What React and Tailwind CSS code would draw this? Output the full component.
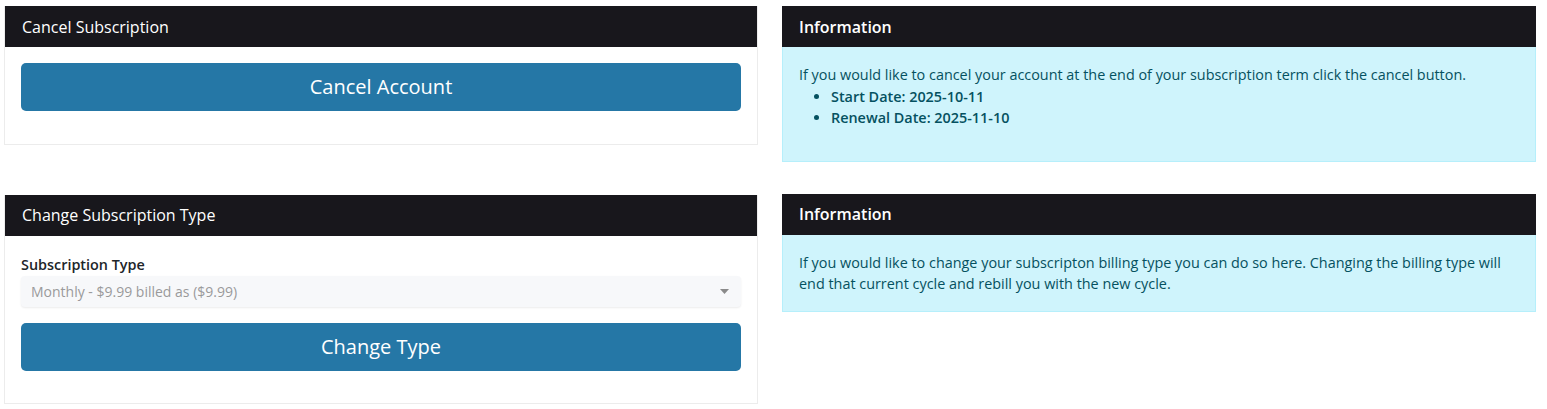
import React from "react";

const font = { fontFamily: '"Open Sans", "Noto Sans", sans-serif' };

function Header({ children, bold }) {
  return (
    <div className={`h-[41px] bg-[#18171c] flex items-center px-[17px] text-white text-[16px] ${bold ? "font-semibold" : ""}`}>
      {children}
    </div>
  );
}

function Info({ children }) {
  return (
    <div className="w-[754px]">
      <Header bold>Information</Header>
      <div className="bg-[#cff4fc] border border-t-0 border-[#b6effb] text-[#055160] text-[14.4px] leading-[21.6px] px-[16px] pt-[17px] pb-[16px]">
        {children}
      </div>
    </div>
  );
}

export default function App() {
  return (
    <div style={font} className="bg-white w-[1547px] h-[409px] pl-[4px] pt-[6px]">
      <div className="grid grid-cols-[754px_754px] gap-x-[24px] gap-y-[32px] items-start">
        <div className="border border-[#ececec] border-t-0">
          <Header>Cancel Subscription</Header>
          <div className="px-[16px] pt-[16px] pb-[33px]">
            <button className="w-full h-[48px] rounded-[5px] bg-[#2577a6] text-white text-[20px] flex items-center justify-center">
              Cancel Account
            </button>
          </div>
        </div>

        <Info>
          <p>If you would like to cancel your account at the end of your subscription term click the cancel button.</p>
          <ul className="list-disc pl-[32px] mb-[16px] font-semibold">
            <li>Start Date: 2025-10-11</li>
            <li>Renewal Date: 2025-11-10</li>
          </ul>
        </Info>

        <div className="border border-[#ececec] border-t-0 mt-px">
          <Header>Change Subscription Type</Header>
          <div className="px-[16px] pt-[18px] pb-[32px]">
            <label className="block text-[14.4px] leading-[21.6px] font-semibold text-[#212529] mb-[1px]">Subscription Type</label>
            <div className="h-[31px] rounded-[4px] bg-[#f7f8fa] shadow-[0_1px_2px_rgba(0,0,0,0.08)] flex items-center justify-between pl-[10px] pr-[12px] text-[14px] text-[#9a9a9a]">
              <span>Monthly - $9.99 billed as ($9.99)</span>
              <svg width="9" height="5" viewBox="0 0 9 5"><path d="M0 0h9L4.5 5z" fill="#8a8a8a" /></svg>
            </div>
            <button className="mt-[16px] w-full h-[48px] rounded-[5px] bg-[#2577a6] text-white text-[20px] flex items-center justify-center">
              Change Type
            </button>
          </div>
        </div>

        <Info>
          <p>
            If you would like to change your subscripton billing type you can do so here. Changing the billing type will end that current cycle and rebill you with the new cycle.
          </p>
        </Info>
      </div>
    </div>
  );
}
